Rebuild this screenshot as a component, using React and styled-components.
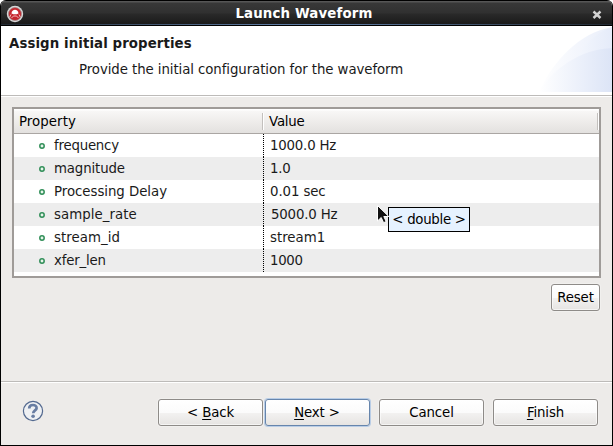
import React from "react";
import styled, { createGlobalStyle, css } from "styled-components";

const Global = createGlobalStyle`
  body { margin: 0; background: #fff; font: 13.33px/16px "DejaVu Sans", sans-serif; color: #1a1a1a; }
  * { box-sizing: border-box; }
`;

const Window = styled.main`
  width: 613px; height: 446px;
  display: flex; flex-direction: column;
  border: 1px solid #000; border-top: 0;
  border-radius: 6px 6px 0 0;
  background: #edebe9;
  overflow: hidden;
`;
const TitleBar = styled.header`
  height: 26px; flex: none;
  display: grid; grid-template-columns: 28px 1fr 28px; align-items: center;
  border-top: 1px solid #000; border-bottom: 1px solid #000;
  background:
    linear-gradient(90deg, #222a33, #5d7ba3 45%, #5d7ba3 55%, #222a33) 0 100% / 100% 1px no-repeat,
    linear-gradient(#565656 0 1px, #383838 2px, #303030 12px, #292929 13px, #1c1c1c 22px);
  color: #fff;
  svg { display: block; }
`;
const AppIcon = styled.svg`margin: 1px 0 0 5px;`;
const CloseIcon = styled.svg`margin: 3px 0 0 8px;`;
const Title = styled.h1`
  margin: 2px 0 0 -5px; text-align: center; font-size: 13.33px; line-height: 22px; font-weight: bold;
  letter-spacing: 0.15px;
`;

const Banner = styled.section`
  height: 71px; flex: none;
  display: flex; justify-content: space-between;
  background: linear-gradient(#bdbbb9, #bdbbb9) 0 69px / 100% 1px no-repeat #fff;
`;
const BannerText = styled.div`padding: 10px 0 0 8px;`;
const Heading = styled.h2`
  margin: 0; font-size: 13.33px; line-height: 16px; font-weight: bold;
  letter-spacing: 0.09px;
`;
const Description = styled.p`
  margin: 10px 0 0 70px; white-space: nowrap;
  letter-spacing: -0.08px;
`;

const Body = styled.section`
  height: 284px; flex: none;
  display: flex; flex-direction: column; align-items: flex-end;
  padding: 10px 12px 0 11px;
  gap: 6px;
`;
const Table = styled.div`
  width: 589px; height: 171px;
  position: relative;
  margin-right: -1px;
  border: 2px solid #9f9b98;
  background: #fff;
`;
const Row = styled.div`
  display: grid; grid-template-columns: 250px 1fr;
  height: 23px; line-height: 23px;
  background: ${(p) => (p.$shaded ? "#ededed" : "#fff")};
`;
const HeaderRow = styled(Row)`
  height: 25px; line-height: 25px;
  color: #000;
  border-bottom: 1px solid #aaa6a3;
  background: linear-gradient(#fff 0 1px, #f8f7f6 2px, #edebe9 14px, #e3e1df);
`;
const HeaderCell = styled.div`
  padding-left: 5px;
  letter-spacing: ${(p) => p.$spacing || 0}px;
  background: linear-gradient(90deg, #c3c0bd 1px, #fff 1px) 100% 4px / 2px 17px no-repeat;
`;
const NameCell = styled.div`
  display: flex; align-items: center;
  padding-left: 25px; gap: 9px;
  letter-spacing: ${(p) => p.$spacing}px;
`;
const ValueCell = styled.div`
  margin-left: -1px;
  padding-left: ${(p) => (p.$editing ? 8 : 7)}px;
  letter-spacing: ${(p) => p.$spacing}px;
  background: repeating-linear-gradient(#000 0 1px, transparent 1px 2px) 0 0 / 1px 100% no-repeat;
`;
const Tooltip = styled.div`
  position: absolute; left: 374px; top: 98px;
  width: 82px; height: 25px;
  border: 1px solid #000; background: #e6f2ff; color: #000;
  line-height: 23px; text-align: center; white-space: nowrap;
  letter-spacing: -0.28px;
`;
const Cursor = styled.svg`position: absolute; left: 362px; top: 95px;`;

const Button = styled.button`
  width: ${(p) => p.$width || 105}px; height: 27px; padding: 0;
  border: 1px solid #8e8b88; border-radius: 3px;
  background: linear-gradient(#fff, #fbfbfb 50%, #f2f1f0 54%, #e6e4e2);
  color: #000; font: inherit; line-height: 23px;
  letter-spacing: -0.12px;
  box-shadow: inset 0 0 0 1px rgba(255,255,255,.6), 0 0 0 1px rgba(255,255,255,.25);
  ${(p) => p.$primary && css`
    border-color: #6685ac;
    box-shadow: 0 0 0 1px #b9cde6;
    padding-right: 1px;
  `}
  u { text-underline-offset: 2px; text-decoration-thickness: 1px; text-decoration-skip-ink: none; }
`;
const Footer = styled.footer`
  flex: 1;
  display: flex; align-items: flex-start;
  padding: 17px 14px 0 21px;
  border-top: 1px solid #bdbbb9;
  box-shadow: inset 0 1px #fff;
`;
const HelpIcon = styled.svg`margin-top: 1px;`;
const Actions = styled.div`display: flex; gap: 9px; margin-left: auto;`;
const Pager = styled.div`display: flex; gap: 2px;`;

const properties = [
  { name: "frequency", value: "1000.0 Hz", spacing: [-0.22, -0.2] },
  { name: "magnitude", value: "1.0", spacing: [-0.14, -0.2] },
  { name: "Processing Delay", value: "0.01 sec", spacing: [-0.04, -0.1] },
  { name: "sample_rate", value: "5000.0 Hz", spacing: [0.04, -0.17], editing: true },
  { name: "stream_id", value: "stream1", spacing: [0.05, 0] },
  { name: "xfer_len", value: "1000", spacing: [-0.2, -0.3] },
];

const BannerArt = () => (
  <svg width="74" height="66" viewBox="0 0 74 66">
    <defs>
      <linearGradient id="outer"><stop offset="0" stopColor="#fff" /><stop offset="1" stopColor="#e9eefa" /></linearGradient>
      <linearGradient id="back"><stop offset="0" stopColor="#f4f7fd" /><stop offset="1" stopColor="#e5ebf9" /></linearGradient>
      <linearGradient id="inner"><stop offset="0" stopColor="#fff" /><stop offset=".6" stopColor="#eaeffa" /><stop offset="1" stopColor="#dce4f6" /></linearGradient>
    </defs>
    <path d="M1 66C15 35 41 7 74 1V66Z" fill="url(#outer)" />
    <path d="M38 34C47 17 58 7 74 1V22C61 23 49 27 38 34Z" fill="url(#back)" />
    <path d="M1 66C14 43 43 23 74 22V66Z" fill="url(#inner)" />
  </svg>
);

export default function App() {
  return (
    <>
      <Global />
      <Window>
        <TitleBar>
          <AppIcon width="18" height="18" viewBox="0 0 18 18">
            <circle cx="9" cy="9" r="8.2" fill="#d7d7d7" />
            <circle cx="9" cy="9" r="6.5" fill="#c5262e" stroke="#9c8b8b" strokeWidth=".7" />
            <path d="M5.5 8.4C5.7 3.6 12.3 3.6 12.5 8.4Q9 10.2 5.5 8.4Z" fill="#fff" />
            <path d="M5 9.5 3.8 12M13 9.5l1.2 2.5M5.5 13l2-2h3l2 2" fill="none" stroke="#f1b8b9" />
          </AppIcon>
          <Title>Launch Waveform</Title>
          <CloseIcon width="10" height="10" viewBox="0 0 10 10">
            <path d="M1.5 1.5l7 6.5M8.5 1.5l-7 6.5" stroke="#d2d2d2" strokeWidth="2.4" />
          </CloseIcon>
        </TitleBar>
        <Banner>
          <BannerText>
            <Heading>Assign initial properties</Heading>
            <Description>Provide the initial configuration for the waveform</Description>
          </BannerText>
          <BannerArt />
        </Banner>
        <Body>
          <Table>
            <HeaderRow>
              <HeaderCell $spacing={0.06}>Property</HeaderCell>
              <HeaderCell $spacing={-0.2}>Value</HeaderCell>
            </HeaderRow>
            {properties.map(({ name, value, spacing, editing }, i) => (
              <Row key={name} $shaded={i % 2 === 1}>
                <NameCell $spacing={spacing[0]}>
                  <svg width="6" height="6" viewBox="0 0 6 6">
                    <circle cx="3" cy="3" r="2.2" fill="#e8f5eb" stroke="#308e58" strokeWidth="1.5" />
                  </svg>
                  {name}
                </NameCell>
                <ValueCell $spacing={spacing[1]} $editing={editing}>{value}</ValueCell>
              </Row>
            ))}
            <Tooltip>&lt; double &gt;</Tooltip>
            <Cursor width="14" height="20" viewBox="0 0 14 20">
              <path d="M1.5 1.5V17l3.7-3.5 2.4 5.2 2.6-1.2-2.4-5h5Z" fill="#111" stroke="#fff" strokeWidth="1" />
            </Cursor>
          </Table>
          <Button $width={49}>Reset</Button>
        </Body>
        <Footer>
          <HelpIcon width="22" height="22" viewBox="0 0 22 22">
            <circle cx="11" cy="11" r="9.6" fill="#eef0f3" stroke="#53698f" strokeWidth="1.2" />
            <path d="M7.2 8.4C7.2 3.8 14.8 4 14.6 8.1 14.5 10.3 11.2 10.5 11.2 13.2" fill="none" stroke="#687da2" strokeWidth="2.7" />
            <circle cx="11.1" cy="16.3" r="1.8" fill="#687da2" />
          </HelpIcon>
          <Actions>
            <Pager>
              <Button>&lt; <u>B</u>ack</Button>
              <Button $primary><u>N</u>ext &gt;</Button>
            </Pager>
            <Button>Cancel</Button>
            <Button><u>F</u>inish</Button>
          </Actions>
        </Footer>
      </Window>
    </>
  );
}
